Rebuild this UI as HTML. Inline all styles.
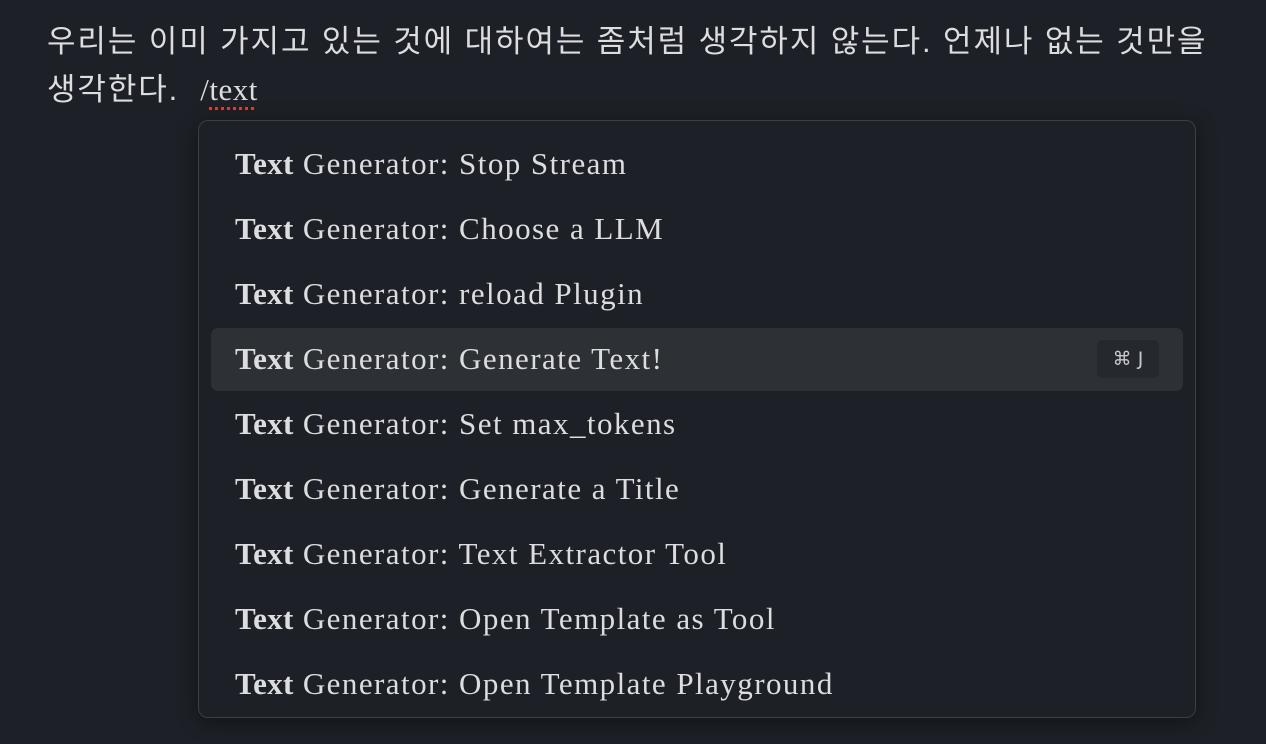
<!DOCTYPE html>
<html><head><meta charset="utf-8"><style>
body{margin:0;width:1266px;height:744px;background:#1d2026;overflow:hidden;position:relative;font-family:"Liberation Serif",serif;color:#dcdddf}
.p{position:absolute;left:47px;top:18px;font-family:"Liberation Sans","Noto Sans CJK KR",sans-serif;font-size:31px;letter-spacing:1.9px;line-height:48px;color:#dcdddf;white-space:nowrap}
.sl{font-family:"Liberation Serif",serif;letter-spacing:0.5px}
.u{text-decoration:underline dotted #d0453a 3px;text-underline-offset:7px}
.pop{position:absolute;left:198px;top:120px;width:996px;height:596px;border:1px solid #3c3f44;border-radius:10px;background:#1d2026;box-shadow:0 4px 20px rgba(0,0,0,.4)}
.r{position:absolute;left:12px;width:972px;height:63px;border-radius:7px;font-size:31px;letter-spacing:1.45px;line-height:61px;padding-left:24px;box-sizing:border-box;color:#dcdddf}
.r b{font-weight:bold;letter-spacing:0.3px}
.s{background:#2d3035}
.k{position:absolute;right:24px;top:12px;height:38px;width:62px;background:#25282e;border-radius:6px;font-family:"DejaVu Sans",sans-serif;font-size:19px;letter-spacing:0;line-height:38px;text-align:center;color:#c8c9cc}
</style></head><body>
<div class="p">우리는 이미 가지고 있는 것에 대하여는 좀처럼 생각하지 않는다. 언제나 없는 것만을<br>생각한다. &nbsp;<span class="sl">/<span class="u">text</span></span></div>
<div class="pop">
<div class="r" style="top:12px"><b>Text</b> Generator: Stop Stream</div>
<div class="r" style="top:77px"><b>Text</b> Generator: Choose a LLM</div>
<div class="r" style="top:142px"><b>Text</b> Generator: reload Plugin</div>
<div class="r s" style="top:207px"><b>Text</b> Generator: Generate Text!<span class="k">⌘ J</span></div>
<div class="r" style="top:272px"><b>Text</b> Generator: Set max_tokens</div>
<div class="r" style="top:337px"><b>Text</b> Generator: Generate a Title</div>
<div class="r" style="top:402px"><b>Text</b> Generator: Text Extractor Tool</div>
<div class="r" style="top:467px"><b>Text</b> Generator: Open Template as Tool</div>
<div class="r" style="top:532px"><b>Text</b> Generator: Open Template Playground</div>
</div>
</body></html>
